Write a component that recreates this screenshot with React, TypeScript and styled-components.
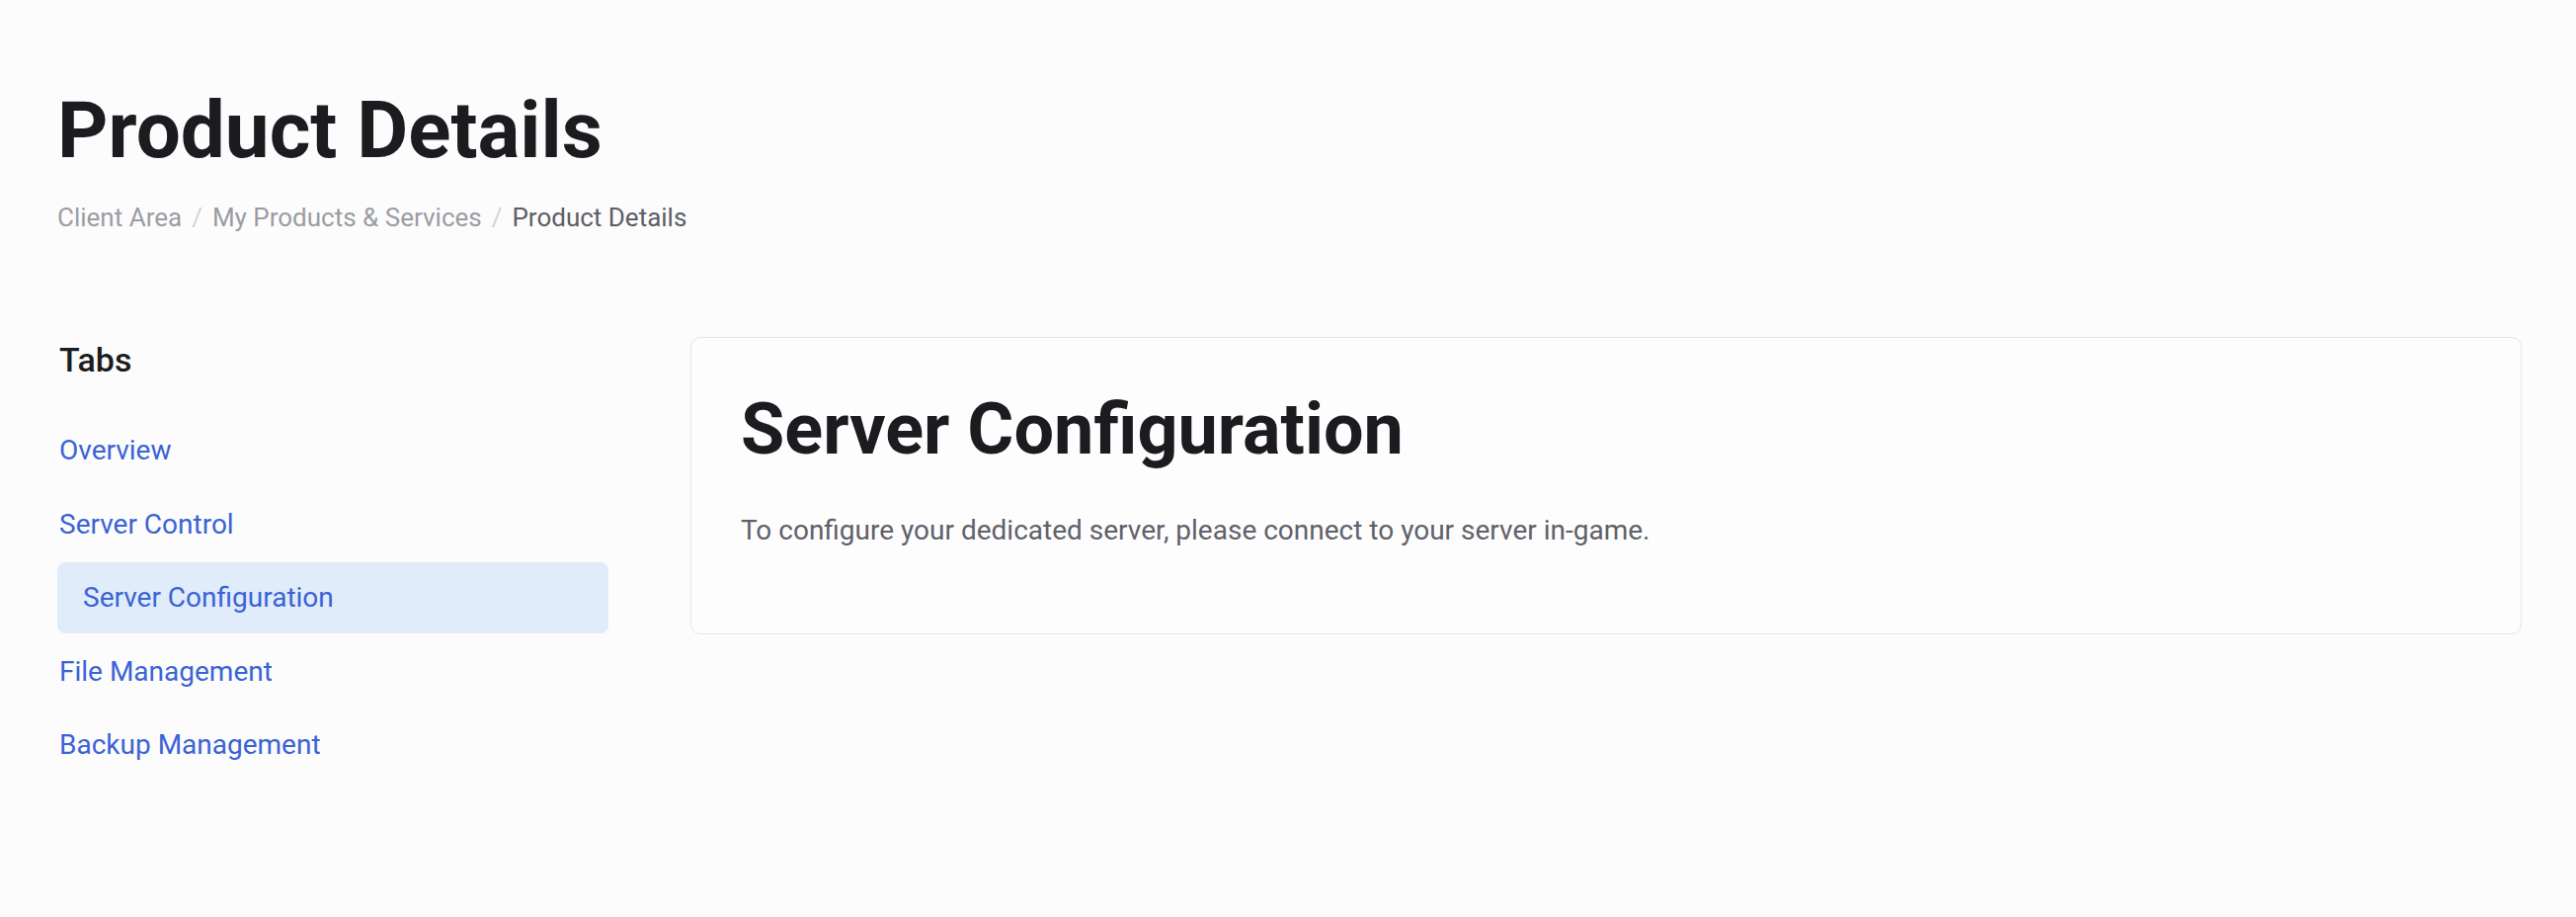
import React from "react";
import styled, { createGlobalStyle } from "styled-components";

const GlobalStyle = createGlobalStyle`
    html, body {
        margin: 0;
        padding: 0;
        background: #fcfcfc;
    }

    body {
        font-family: Roboto, "Liberation Sans", Arial, sans-serif;
        -webkit-font-smoothing: antialiased;
    }
`;

type Crumb = { label: string; current?: boolean };

const crumbs: Crumb[] = [
    { label: "Client Area" },
    { label: "My Products & Services" },
    { label: "Product Details", current: true },
];

const tabs = ["Overview", "Server Control", "Server Configuration", "File Management", "Backup Management"];

const ACTIVE_TAB = "Server Configuration";

export default function App() {
    return (
        <>
            <GlobalStyle />
            <Page>
                <Header>
                    <PageTitle>Product Details</PageTitle>
                    <Breadcrumbs>
                        {crumbs.map((crumb, i) => (
                            <React.Fragment key={crumb.label}>
                                {i > 0 && <Separator>/</Separator>}
                                <CrumbItem $current={crumb.current}>{crumb.label}</CrumbItem>
                            </React.Fragment>
                        ))}
                    </Breadcrumbs>
                </Header>

                <Body>
                    <Sidebar>
                        <SidebarTitle>Tabs</SidebarTitle>
                        <TabList>
                            {tabs.map(tab => (
                                <TabLink key={tab} $active={tab === ACTIVE_TAB}>
                                    {tab}
                                </TabLink>
                            ))}
                        </TabList>
                    </Sidebar>

                    <Card>
                        <CardTitle>Server Configuration</CardTitle>
                        <CardText>To configure your dedicated server, please connect to your server in-game.</CardText>
                    </Card>
                </Body>
            </Page>
        </>
    );
}

const Page = styled.div`
    min-height: 928px;
    box-sizing: border-box;
    padding: 84px 55px 0 58px;
`;

const Header = styled.header`
    display: flex;
    flex-direction: column;
    gap: 21px;
`;

const PageTitle = styled.h1`
    margin: 0;
    font-size: 80px;
    line-height: 1.2;
    font-weight: 700;
    color: #1b1c1f;
`;

const Breadcrumbs = styled.nav`
    display: flex;
    align-items: center;
    font-size: 26px;
    line-height: 1.5;
    color: #9b9ca3;
`;

const CrumbItem = styled.span<{ $current?: boolean }>`
    color: ${p => (p.$current ? "#5c5e66" : "#9b9ca3")};
`;

const Separator = styled.span`
    padding: 0 10px;
    color: #d3d4d8;
`;

const Body = styled.div`
    display: grid;
    grid-template-columns: 558px 1fr;
    column-gap: 83px;
    align-items: start;
    margin-top: 101px;
`;

const Sidebar = styled.aside`
    display: flex;
    flex-direction: column;
    padding-top: 3px;
`;

const SidebarTitle = styled.h3`
    margin: 0 0 35px 2px;
    font-size: 34px;
    line-height: 1.2;
    font-weight: 500;
    color: #1b1c1f;
`;

const TabList = styled.div`
    display: flex;
    flex-direction: column;
    gap: 2.5px;
`;

const TabLink = styled.a<{ $active?: boolean }>`
    display: flex;
    align-items: center;
    height: 72px;
    padding-left: ${p => (p.$active ? "26px" : "2px")};
    border-radius: 8px;
    background: ${p => (p.$active ? "#e1ecfb" : "transparent")};
    font-size: 28px;
    color: #3a63d6;
    text-decoration: none;
    cursor: pointer;
`;

const Card = styled.section`
    border: 1px solid #e4e4e7;
    border-radius: 10px;
    background: #fdfdfd;
    padding: 50px 50px 83px 50px;
`;

const CardTitle = styled.h2`
    margin: 0 0 38px;
    font-size: 72px;
    line-height: 1.2;
    font-weight: 700;
    color: #1b1c1f;
`;

const CardText = styled.p`
    margin: 0;
    font-size: 28px;
    line-height: 1.5;
    color: #5f616a;
`;
